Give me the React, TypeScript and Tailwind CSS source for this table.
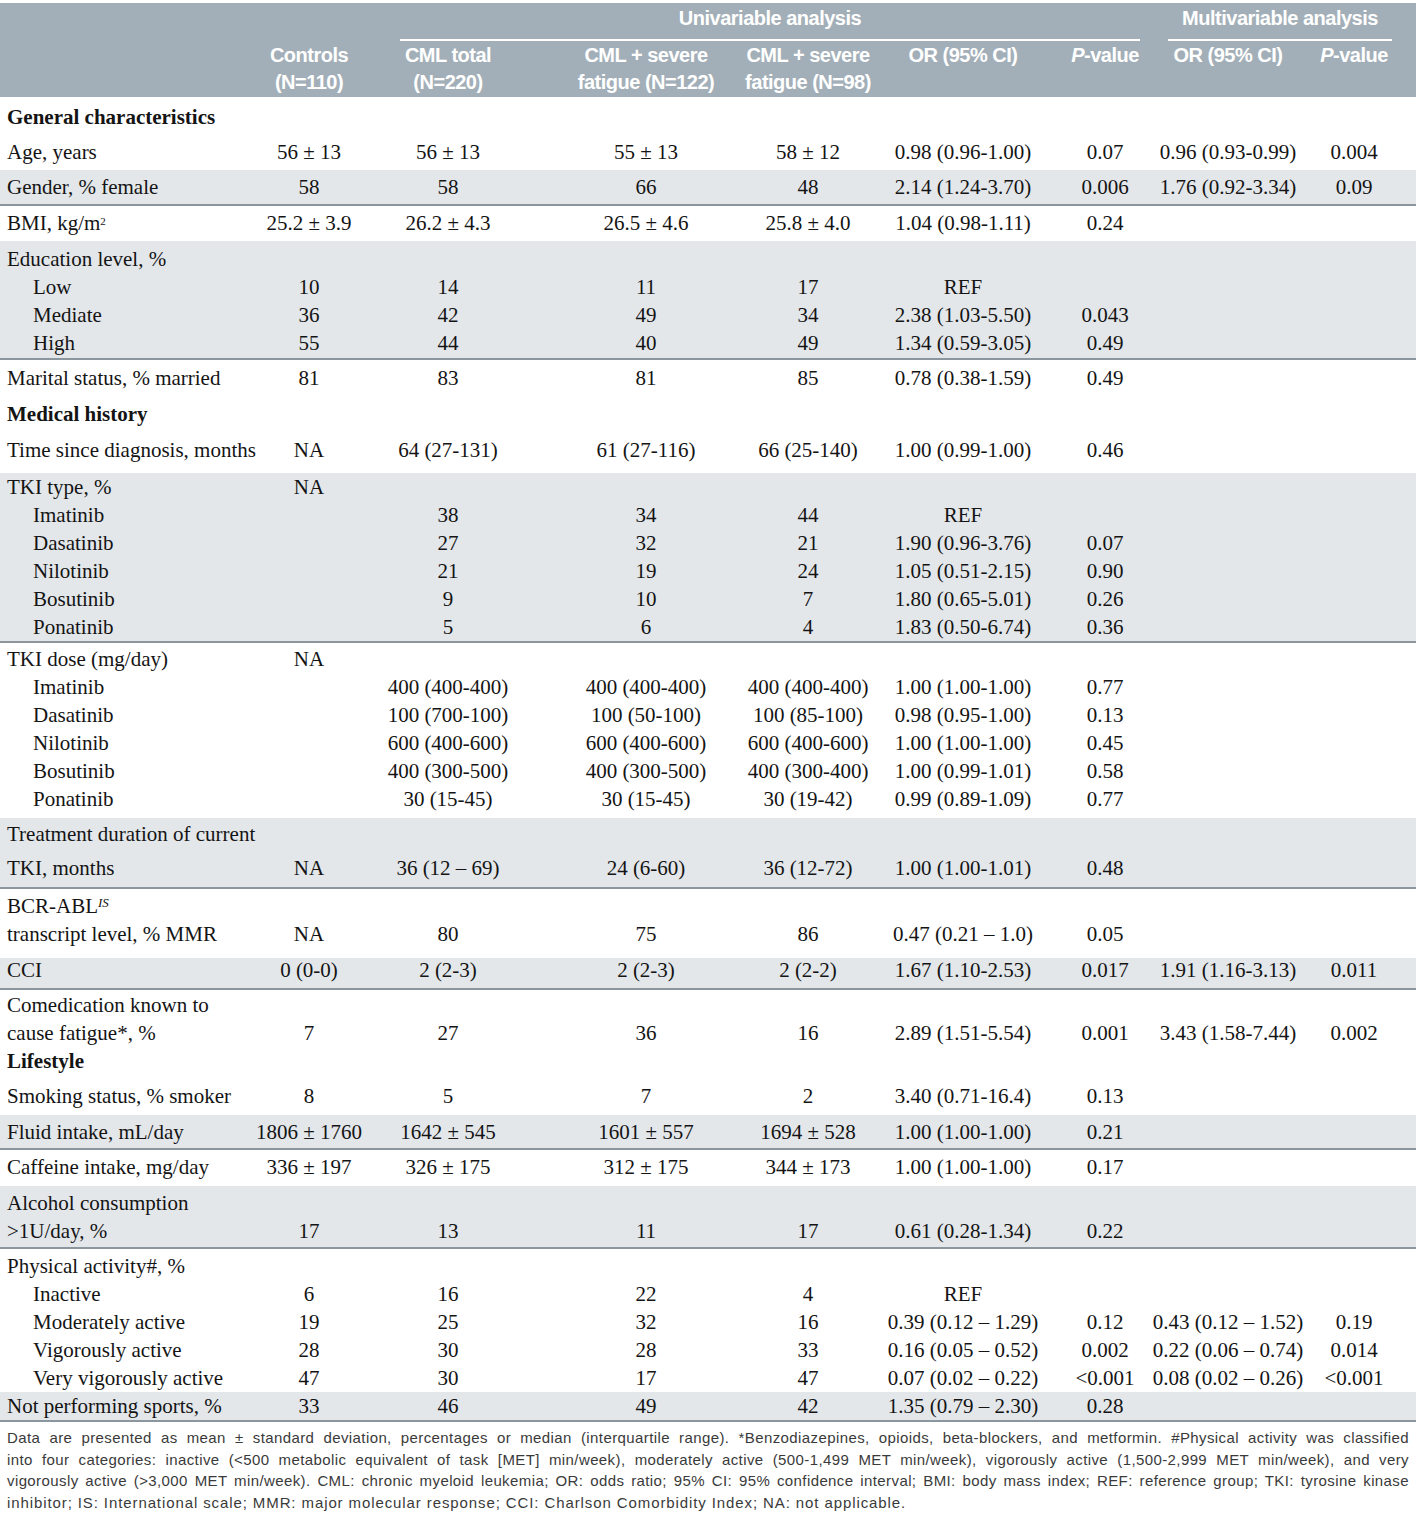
import React from "react";

type Line = {
  label: React.ReactNode;
  sub?: boolean;
  bold?: boolean;
  vals?: string[];
  cls?: string;
};

type Block = {
  pad: string;
  shade?: boolean;
  lines: Line[];
};

const grid = "grid grid-cols-[262px_94px_184px_212px_112px_198px_86px_160px_92px]";

const blocks: Block[] = [
  { pad: "pt-[6px] pb-[4px]", lines: [{ label: "General characteristics", bold: true }] },
  { pad: "pt-[3px] pb-[4px]", lines: [{ label: "Age, years", vals: ["56 ± 13", "56 ± 13", "55 ± 13", "58 ± 12", "0.98 (0.96-1.00)", "0.07", "0.96 (0.93-0.99)", "0.004"] }] },
  { pad: "pt-[3px] pb-[3px]", shade: true, lines: [{ label: "Gender, % female", vals: ["58", "58", "66", "48", "2.14 (1.24-3.70)", "0.006", "1.76 (0.92-3.34)", "0.09"] }] },
  {
    pad: "pt-[3px] pb-[4px]",
    lines: [
      {
        label: (
          <>
            BMI, kg/m<sup className="text-[11px]">2</sup>
          </>
        ),
        vals: ["25.2 ± 3.9", "26.2 ± 4.3", "26.5 ± 4.6", "25.8 ± 4.0", "1.04 (0.98-1.11)", "0.24"],
      },
    ],
  },
  {
    pad: "pt-[4px] pb-[1px]",
    shade: true,
    lines: [
      { label: "Education level, %" },
      { label: "Low", sub: true, vals: ["10", "14", "11", "17", "REF"] },
      { label: "Mediate", sub: true, vals: ["36", "42", "49", "34", "2.38 (1.03-5.50)", "0.043"] },
      { label: "High", sub: true, vals: ["55", "44", "40", "49", "1.34 (0.59-3.05)", "0.49"] },
    ],
  },
  { pad: "pt-[4px] pb-[5px]", lines: [{ label: "Marital status, % married", vals: ["81", "83", "81", "85", "0.78 (0.38-1.59)", "0.49"] }] },
  { pad: "pt-[3px] pb-[4px]", lines: [{ label: "Medical history", bold: true }] },
  { pad: "pt-[4px] pb-[9px]", lines: [{ label: "Time since diagnosis, months", vals: ["NA", "64 (27-131)", "61 (27-116)", "66 (25-140)", "1.00 (0.99-1.00)", "0.46"] }] },
  {
    pad: "pt-0 pb-0",
    shade: true,
    lines: [
      { label: "TKI type, %", vals: ["NA"] },
      { label: "Imatinib", sub: true, vals: ["", "38", "34", "44", "REF"] },
      { label: "Dasatinib", sub: true, vals: ["", "27", "32", "21", "1.90 (0.96-3.76)", "0.07"] },
      { label: "Nilotinib", sub: true, vals: ["", "21", "19", "24", "1.05 (0.51-2.15)", "0.90"] },
      { label: "Bosutinib", sub: true, vals: ["", "9", "10", "7", "1.80 (0.65-5.01)", "0.26"] },
      { label: "Ponatinib", sub: true, vals: ["", "5", "6", "4", "1.83 (0.50-6.74)", "0.36"] },
    ],
  },
  {
    pad: "pt-[2px] pb-[5px]",
    lines: [
      { label: "TKI dose (mg/day)", vals: ["NA"] },
      { label: "Imatinib", sub: true, vals: ["", "400 (400-400)", "400 (400-400)", "400 (400-400)", "1.00 (1.00-1.00)", "0.77"] },
      { label: "Dasatinib", sub: true, vals: ["", "100 (700-100)", "100 (50-100)", "100 (85-100)", "0.98 (0.95-1.00)", "0.13"] },
      { label: "Nilotinib", sub: true, vals: ["", "600 (400-600)", "600 (400-600)", "600 (400-600)", "1.00 (1.00-1.00)", "0.45"] },
      { label: "Bosutinib", sub: true, vals: ["", "400 (300-500)", "400 (300-500)", "400 (300-400)", "1.00 (0.99-1.01)", "0.58"] },
      { label: "Ponatinib", sub: true, vals: ["", "30 (15-45)", "30 (15-45)", "30 (19-42)", "0.99 (0.89-1.09)", "0.77"] },
    ],
  },
  {
    pad: "pt-[2px] pb-[5px]",
    shade: true,
    lines: [
      { label: "Treatment duration of current" },
      { label: "TKI, months", cls: "mt-[6px] h-[28px] leading-[28px]", vals: ["NA", "36 (12 – 69)", "24 (6-60)", "36 (12-72)", "1.00 (1.00-1.01)", "0.48"] },
    ],
  },
  {
    pad: "pt-[3px] pb-[10px]",
    lines: [
      {
        label: (
          <>
            BCR-ABL<sup className="text-[13px] italic">IS</sup>
          </>
        ),
      },
      { label: "transcript level, % MMR", vals: ["NA", "80", "75", "86", "0.47 (0.21 – 1.0)", "0.05"] },
    ],
  },
  { pad: "pt-0 pb-[6px]", shade: true, lines: [{ label: "CCI", cls: "h-[24px] leading-[24px]", vals: ["0 (0-0)", "2 (2-3)", "2 (2-3)", "2 (2-2)", "1.67 (1.10-2.53)", "0.017", "1.91 (1.16-3.13)", "0.011"] }] },
  {
    pad: "pt-[1px] pb-0",
    lines: [
      { label: "Comedication known to" },
      { label: "cause fatigue*, %", vals: ["7", "27", "36", "16", "2.89 (1.51-5.54)", "0.001", "3.43 (1.58-7.44)", "0.002"] },
    ],
  },
  { pad: "pt-0 pb-0", lines: [{ label: "Lifestyle", bold: true }] },
  { pad: "pt-[7px] pb-[5px]", lines: [{ label: "Smoking status, % smoker", vals: ["8", "5", "7", "2", "3.40 (0.71-16.4)", "0.13"] }] },
  { pad: "pt-[3px] pb-[2px]", shade: true, lines: [{ label: "Fluid intake, mL/day", vals: ["1806 ± 1760", "1642 ± 545", "1601 ± 557", "1694 ± 528", "1.00 (1.00-1.00)", "0.21"] }] },
  { pad: "pt-[3px] pb-[5px]", lines: [{ label: "Caffeine intake, mg/day", vals: ["336 ± 197", "326 ± 175", "312 ± 175", "344 ± 173", "1.00 (1.00-1.00)", "0.17"] }] },
  {
    pad: "pt-[3px] pb-[2px]",
    shade: true,
    lines: [
      { label: "Alcohol consumption" },
      { label: ">1U/day, %", vals: ["17", "13", "11", "17", "0.61 (0.28-1.34)", "0.22"] },
    ],
  },
  {
    pad: "pt-[3px] pb-0",
    lines: [
      { label: "Physical activity#, %" },
      { label: "Inactive", sub: true, vals: ["6", "16", "22", "4", "REF"] },
      { label: "Moderately active", sub: true, vals: ["19", "25", "32", "16", "0.39 (0.12 – 1.29)", "0.12", "0.43 (0.12 – 1.52)", "0.19"] },
      { label: "Vigorously active", sub: true, vals: ["28", "30", "28", "33", "0.16 (0.05 – 0.52)", "0.002", "0.22 (0.06 – 0.74)", "0.014"] },
      { label: "Very vigorously active", sub: true, vals: ["47", "30", "17", "47", "0.07 (0.02 – 0.22)", "<0.001", "0.08 (0.02 – 0.26)", "<0.001"] },
    ],
  },
  { pad: "pt-0 pb-0", shade: true, lines: [{ label: "Not performing sports, %", vals: ["33", "46", "49", "42", "1.35 (0.79 – 2.30)", "0.28"] }] },
];

const headCols: string[][] = [
  ["Controls", "(N=110)"],
  ["CML total", "(N=220)"],
  ["CML + severe", "fatigue (N=122)"],
  ["CML + severe", "fatigue (N=98)"],
  ["OR (95% CI)"],
  ["P-value"],
  ["OR (95% CI)"],
  ["P-value"],
];

const notes = [
  "Data are presented as mean ± standard deviation, percentages or median (interquartile range). *Benzodiazepines, opioids, beta-blockers, and metformin. #Physical activity was classified",
  "into four categories: inactive (<500 metabolic equivalent of task [MET] min/week), moderately active (500-1,499 MET min/week), vigorously active (1,500-2,999 MET min/week), and very",
  "vigorously active (>3,000 MET min/week). CML: chronic myeloid leukemia; OR: odds ratio; 95% CI: 95% confidence interval; BMI: body mass index; REF: reference group; TKI: tyrosine kinase",
];

function HeadText({ text }: { text: string }) {
  if (text === "P-value") {
    return (
      <span>
        <span className="italic">P</span>-value
      </span>
    );
  }
  return <span>{text}</span>;
}

function Header() {
  return (
    <div className="bg-[#a3afb8] text-white font-bold font-['Liberation_Sans',sans-serif] text-[20px] tracking-[-0.5px] whitespace-nowrap">
      <div className="flex">
        <div className="w-[400px]" />
        <div className="w-[740px] border-b-2 border-white text-center pt-[2px] pb-[8px] leading-[26px]">Univariable analysis</div>
        <div className="w-[28px]" />
        <div className="w-[224px] border-b-2 border-white text-center pt-[2px] pb-[8px] leading-[26px]">Multivariable analysis</div>
      </div>
      <div className={`${grid} pt-[1px] pb-[1px] leading-[27px]`}>
        <div />
        {headCols.map((c, i) => (
          <div key={i} className="flex flex-col items-center">
            {c.map((t) => (
              <HeadText key={t} text={t} />
            ))}
          </div>
        ))}
      </div>
    </div>
  );
}

function Row({ line }: { line: Line }) {
  const vals = line.vals ?? [];
  return (
    <div className={`${grid} ${line.cls ?? "h-[28px] leading-[28px]"}`}>
      <div className={`${line.sub ? "pl-[33px]" : "pl-[7px]"} ${line.bold ? "font-bold" : ""} whitespace-nowrap`}>{line.label}</div>
      {Array.from({ length: 8 }).map((_, i) => (
        <div key={i} className="flex justify-center whitespace-nowrap">
          {vals[i] ?? ""}
        </div>
      ))}
    </div>
  );
}

export default function App() {
  return (
    <div className="min-h-screen bg-white pt-[3px]">
      <div className="w-[1416px]">
        <Header />

        <div className="font-['Liberation_Serif',serif] text-[21px] text-[#141414]">
          {blocks.map((b, i) => (
            <div key={i} className={`${b.shade ? "bg-[#e3e7ea] border-b-2 border-[#8b969f]" : ""} ${b.pad}`}>
              {b.lines.map((l, j) => (
                <Row key={j} line={l} />
              ))}
            </div>
          ))}
        </div>

        {/* footnote */}
        <div className="px-[7px] pt-[5px] font-['Liberation_Sans',sans-serif] text-[15px] leading-[21.5px] text-[#3a3a3a]">
          {notes.map((n) => (
            <div key={n} className="tracking-[0.4px] text-justify [text-align-last:justify]">
              {n}
            </div>
          ))}
          <div className="tracking-[0.9px]">inhibitor; IS: International scale; MMR: major molecular response; CCI: Charlson Comorbidity Index; NA: not applicable.</div>
        </div>
      </div>
    </div>
  );
}
